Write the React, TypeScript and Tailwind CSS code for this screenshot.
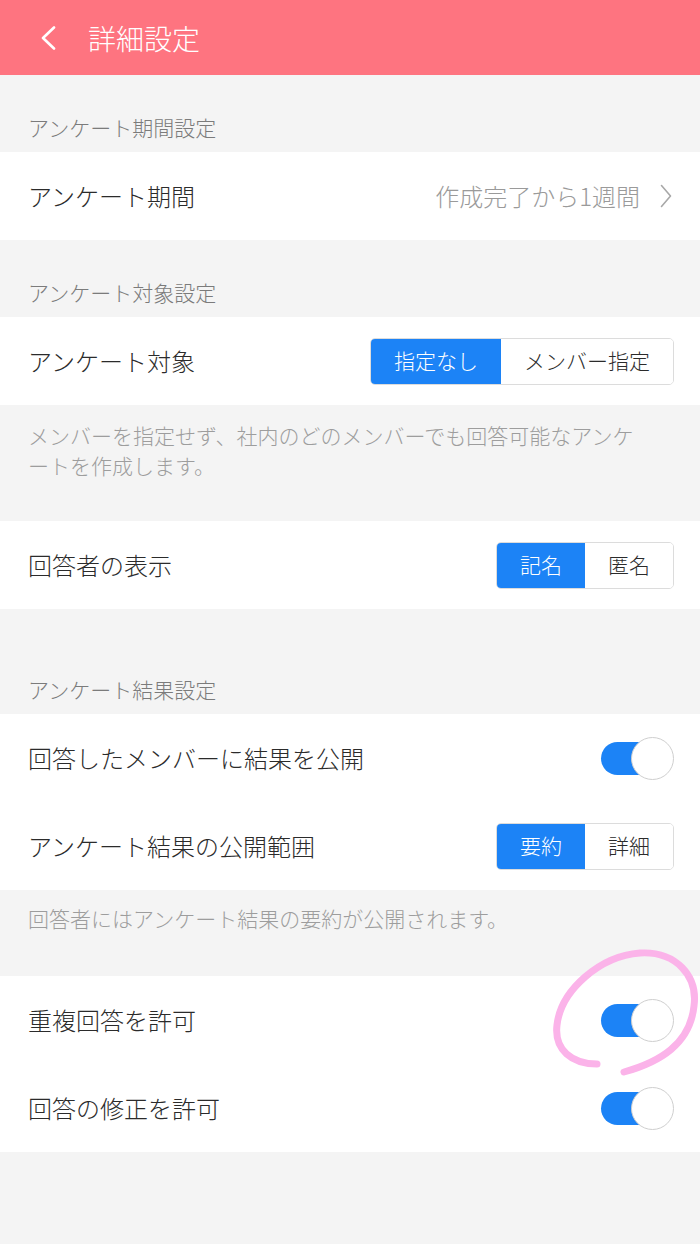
import React from "react";

const FONT = { fontFamily: '"Noto Sans CJK JP", "Noto Sans", sans-serif' };

function SectionLabel({ text, h }: { text: string; h: string }) {
  return (
    <div className={`flex items-end px-7 pb-[10px] ${h}`}>
      <span className="text-[21px] leading-[30px] text-[#7b7b7b]">{text}</span>
    </div>
  );
}

function Row({ label, children }: { label: string; children?: React.ReactNode }) {
  return (
    <div className="flex h-[88px] items-center justify-between bg-white pl-7 pr-[26px]">
      <span className="text-[24px] text-[#2b2b2b]">{label}</span>
      {children}
    </div>
  );
}

function Segmented({ items }: { items: string[] }) {
  return (
    <div className="flex h-[47px] overflow-hidden rounded-[5px] border border-[#dcdcdc]">
      {items.map((it, i) => (
        <div
          key={it}
          className={
            i === 0
              ? "flex items-center bg-[#1c83f6] px-[23px] text-[21px] text-white"
              : "flex items-center bg-white px-[23px] text-[21px] text-[#2b2b2b]"
          }
        >
          {it}
        </div>
      ))}
    </div>
  );
}

function Toggle() {
  return (
    <div className="relative h-[43px] w-[73px]">
      <div className="absolute left-0 top-[5px] h-[33px] w-[60px] rounded-full bg-[#1c83f6]" />
      <div className="absolute right-0 top-0 h-[43px] w-[43px] rounded-full border border-[#cfcfcf] bg-white" />
    </div>
  );
}

export default function App() {
  return (
    <div className="relative min-h-[1244px] w-[700px] bg-[#f4f4f4] font-light" style={FONT}>
      <div className="flex h-[75px] items-center bg-[#fe7480] pl-[40px]">
        <svg width="16" height="24" viewBox="0 0 16 24" fill="none">
          <path d="M14 1.5 L3 12 L14 22.5" stroke="white" strokeWidth="2.6" strokeLinecap="round" strokeLinejoin="round" />
        </svg>
        <span className="ml-[32px] text-[28px] text-white">詳細設定</span>
      </div>

      <SectionLabel text="アンケート期間設定" h="h-[77px]" />
      <Row label="アンケート期間">
        <div className="flex items-center">
          <span className="text-[24px] text-[#9a9a9a]">作成完了から1週間</span>
          <svg className="ml-[20px] mr-[2px]" width="12" height="24" viewBox="0 0 12 24" fill="none">
            <path d="M1.5 1.5 L10.5 12 L1.5 22.5" stroke="#a8a8a8" strokeWidth="1.6" strokeLinecap="round" strokeLinejoin="round" />
          </svg>
        </div>
      </Row>

      <SectionLabel text="アンケート対象設定" h="h-[77px]" />
      <Row label="アンケート対象">
        <Segmented items={["指定なし", "メンバー指定"]} />
      </Row>
      <div className="h-[116px] pl-7 pr-[56px] pt-[15px] text-[21px] leading-[30px] text-[#9d9d9d]">
        メンバーを指定せず、社内のどのメンバーでも回答可能なアンケートを作成します。
      </div>

      <Row label="回答者の表示">
        <Segmented items={["記名", "匿名"]} />
      </Row>

      <SectionLabel text="アンケート結果設定" h="h-[105px]" />
      <Row label="回答したメンバーに結果を公開">
        <Toggle />
      </Row>
      <Row label="アンケート結果の公開範囲">
        <Segmented items={["要約", "詳細"]} />
      </Row>
      <div className="h-[86px] px-7 pt-[13px] text-[21px] leading-[30px] text-[#9d9d9d]">
        回答者にはアンケート結果の要約が公開されます。
      </div>

      <Row label="重複回答を許可">
        <Toggle />
      </Row>
      <Row label="回答の修正を許可">
        <Toggle />
      </Row>

      <svg className="pointer-events-none absolute left-0 top-0" width="700" height="1244" viewBox="0 0 700 1244" fill="none">
        <path
          d="M597 1064 C572 1064, 554 1050, 557 1025 C561 990, 600 956, 640 953 C676 951, 698 976, 694 1006 C690 1044, 660 1062, 624 1072"
          stroke="#fbb3e9"
          strokeWidth="7"
          strokeLinecap="round"
          strokeLinejoin="round"
        />
      </svg>
    </div>
  );
}
